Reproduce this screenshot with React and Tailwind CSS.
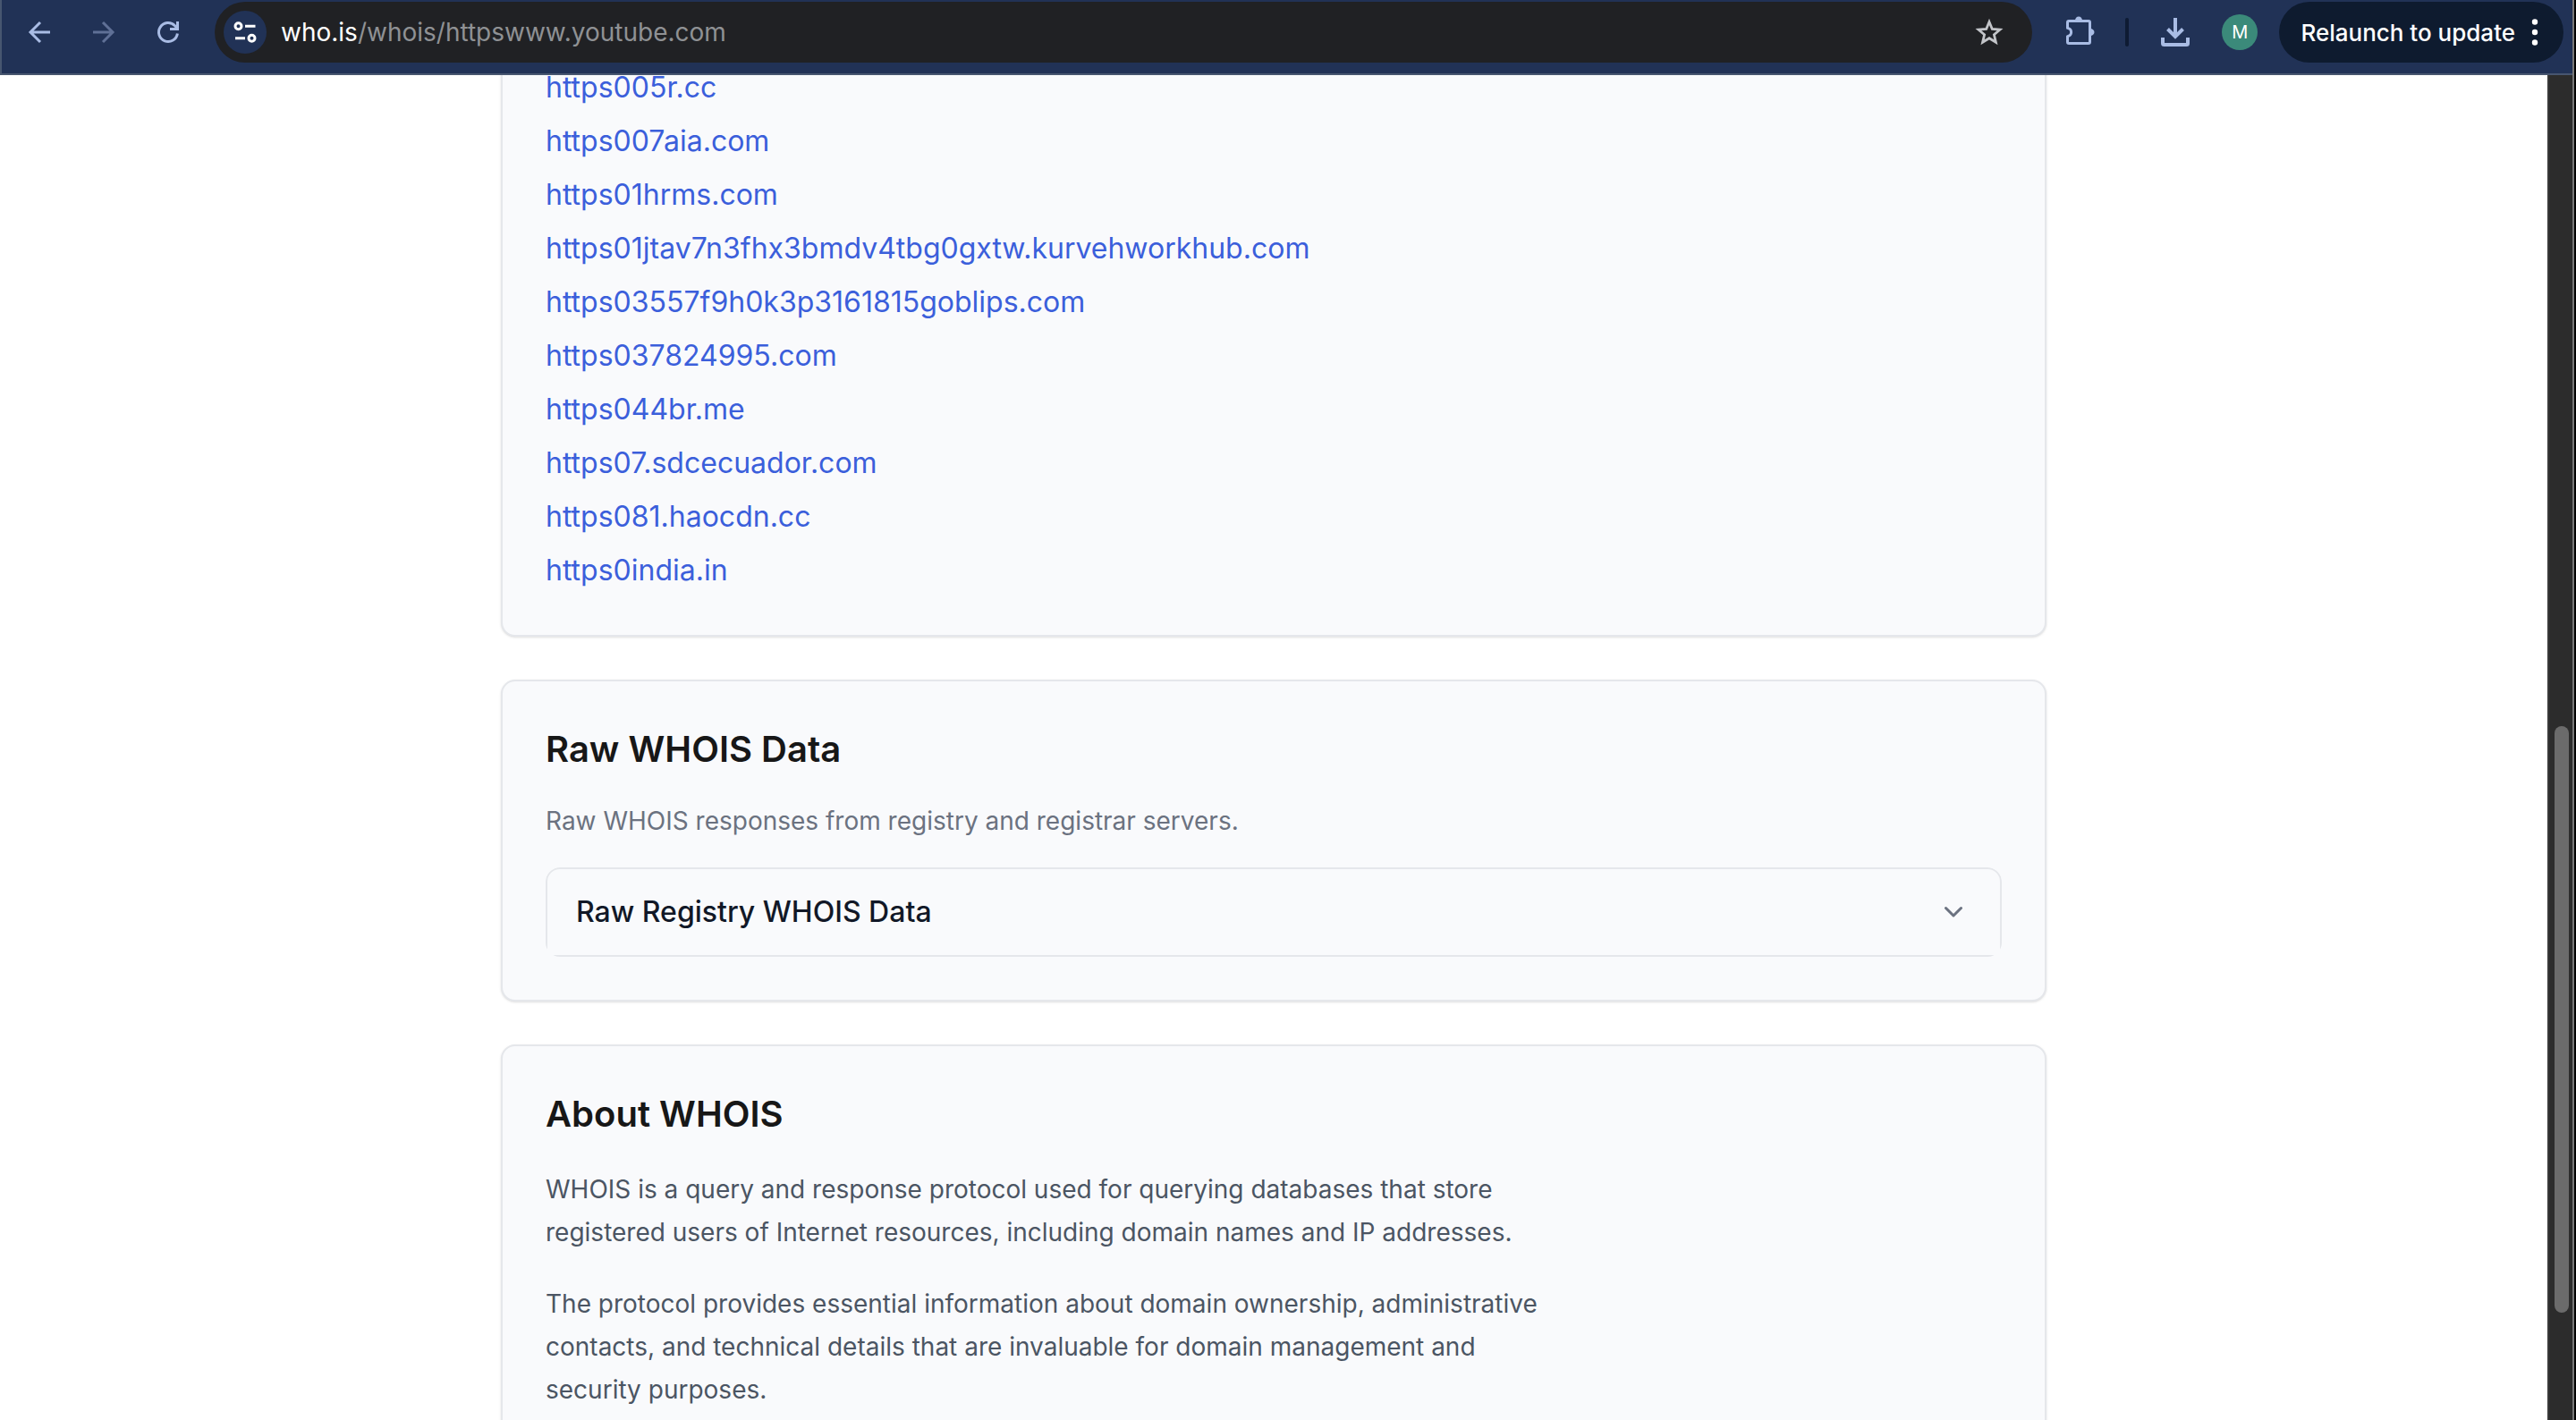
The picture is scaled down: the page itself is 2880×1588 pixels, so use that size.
import React from "react";

const domains = [
  "https005r.cc",
  "https007aia.com",
  "https01hrms.com",
  "https01jtav7n3fhx3bmdv4tbg0gxtw.kurvehworkhub.com",
  "https03557f9h0k3p3161815goblips.com",
  "https037824995.com",
  "https044br.me",
  "https07.sdcecuador.com",
  "https081.haocdn.cc",
  "https0india.in",
];

function IconButton({ label, className = "", children }) {
  return (
    <button type="button" aria-label={label} className={`flex shrink-0 items-center justify-center ${className}`}>
      {children}
    </button>
  );
}

function Toolbar() {
  return (
    <header className="flex h-[84px] shrink-0 items-start border-b-2 border-l-2 border-[#47566f] bg-[#213256] pt-[2px] pr-[10px]">
      <nav aria-label="Browser" className="flex h-[68px] shrink-0 items-center gap-8 pl-[22px] text-[#a9bce4]">
        <IconButton label="Back" className="size-10">
          <svg viewBox="0 0 40 40" className="size-10" fill="none" stroke="currentColor" strokeWidth="3">
            <path d="M32 20H10.5M21 9L10 20l11 11" />
          </svg>
        </IconButton>
        <IconButton label="Forward" className="size-10 text-[#5f7096]">
          <svg viewBox="0 0 40 40" className="size-10" fill="none" stroke="currentColor" strokeWidth="3">
            <path d="M8 20h21.500M19 9l11 11-11 11" />
          </svg>
        </IconButton>
        <IconButton label="Reload" className="size-10">
          <svg viewBox="0 0 40 40" className="size-10" fill="none" stroke="currentColor" strokeWidth="3">
            <path d="M30.400 21.500A10.500 10.500 0 1 1 27.500 12.700L30 15.500" />
            <path d="M30.500 8v8.500H22" />
          </svg>
        </IconButton>
      </nav>
      <div className="ml-8 flex h-[68px] min-w-0 flex-1 items-center rounded-full bg-[#202124] pr-8 pl-[10px]">
        <IconButton label="View site information" className="size-12 rounded-full bg-[#213256] text-white">
          <svg viewBox="0 0 48 48" className="size-12" fill="none" stroke="currentColor" strokeWidth="3">
            <circle cx="16.500" cy="17.300" r="3.500" />
            <path d="M24 17.300h11.500M13 30.700h11" />
            <circle cx="31.500" cy="30.700" r="3.500" />
          </svg>
        </IconButton>
        <a href="#address" className="ml-4 flex-1 truncate text-[28px] leading-9 text-[#8f9194]">
          <span className="text-white">who.is</span>/whois/httpswww.youtube.com
        </a>
        <IconButton label="Bookmark this tab" className="size-8 text-[#c3c5c9]">
          <svg viewBox="0 0 32 32" className="size-8" fill="none" stroke="currentColor" strokeWidth="2.800">
            <path d="M16 4.500l3.300 8 8.700.7-6.600 5.600 2 8.400L16 22.700l-7.400 4.500 2-8.400L4 13.200l8.700-.7z" />
          </svg>
        </IconButton>
      </div>
      <div className="flex h-[68px] shrink-0 items-center text-[#a9bce4]">
        <IconButton label="Extensions" className="ml-8 size-10">
          <svg viewBox="0 0 40 40" className="size-10" fill="none">
            <path
              d="M9 7.500H31A1.500 1.500 0 0 1 32.500 9V31A1.500 1.500 0 0 1 31 32.500H9A1.500 1.500 0 0 1 7.500 31V24.600C13 23.500 13 16.500 7.500 15.400V9A1.500 1.500 0 0 1 9 7.500Z"
              stroke="currentColor"
              strokeWidth="3"
              strokeLinejoin="round"
            />
            <path d="M16 7a4 4.500 0 0 1 8 0zM33 16a4.500 4 0 0 1 0 8z" fill="currentColor" />
          </svg>
        </IconButton>
        <span className="ml-8 h-8 w-1 rounded-full bg-[#0e1b33]" />
        <IconButton label="Downloads" className="ml-8 size-10">
          <svg viewBox="0 0 40 40" className="size-10" fill="none" stroke="currentColor" strokeWidth="4">
            <path d="M20 4v21M11.500 16.500L20 25l8.500-8.500" />
            <path d="M6 26v6.500A1.500 1.500 0 0 0 7.500 34h25a1.500 1.500 0 0 0 1.500-1.500V26" />
          </svg>
        </IconButton>
        <button type="button" aria-label="Profile" className="ml-8 size-10 rounded-full bg-[#3b8a7a] text-xl text-white">
          M
        </button>
        <button
          type="button"
          className="ml-6 flex h-[68px] items-center gap-[18px] rounded-full bg-[#0e1b2f] pr-7 pl-6 text-[26px] font-medium text-white"
        >
          Relaunch to update
          <svg viewBox="0 0 8 32" className="h-8 w-2" fill="currentColor">
            <circle cx="4" cy="4.500" r="3.200" />
            <circle cx="4" cy="16" r="3.200" />
            <circle cx="4" cy="27.500" r="3.200" />
          </svg>
        </button>
      </div>
    </header>
  );
}

function Card({ children }) {
  return (
    <section className="rounded-2xl border-2 border-gray-200 bg-[#f9fafc] p-12 shadow-sm">{children}</section>
  );
}

function CardTitle({ children }) {
  return <h2 className="text-[40px] leading-[56px] font-semibold text-[#171717]">{children}</h2>;
}

export default function App() {
  return (
    <div className="h-screen border-r-2 border-black font-['Inter',sans-serif]">
      <div className="flex h-full flex-col overflow-hidden border-r-2 border-[#777777] bg-white">
        <Toolbar />
        <div className="flex min-h-0 flex-1">
          <main className="min-w-0 flex-1 overflow-hidden">
            <div className="mx-auto -mt-[60px] flex max-w-[1728px] flex-col gap-12">
              <Card>
                <ul className="flex flex-col gap-3">
                  {domains.map((d) => (
                    <li key={d} className="text-[32px] leading-[48px]">
                      <a href={`#${d}`} className="text-[#3b5fdb]">
                        {d}
                      </a>
                    </li>
                  ))}
                </ul>
              </Card>
              <Card>
                <CardTitle>Raw WHOIS Data</CardTitle>
                <p className="my-8 text-[28px] leading-10 text-[#6b7280]">
                  Raw WHOIS responses from registry and registrar servers.
                </p>
                <div className="overflow-hidden rounded-2xl">
                  <button
                    type="button"
                    aria-expanded="false"
                    className="flex h-[100px] w-full items-center justify-between rounded-t-2xl border-2 border-gray-200 px-8 text-left text-[32px] font-medium text-[#111827]"
                  >
                    Raw Registry WHOIS Data
                    <svg
                      viewBox="0 0 40 40"
                      className="size-10 text-[#6b7280]"
                      fill="none"
                      stroke="currentColor"
                      strokeWidth="3"
                      strokeLinecap="round"
                      strokeLinejoin="round"
                    >
                      <path d="M11.500 15.500L20 24l8.500-8.500" />
                    </svg>
                  </button>
                </div>
              </Card>
              <Card>
                <CardTitle>About WHOIS</CardTitle>
                <div className="mt-8 flex max-w-[1120px] flex-col gap-8 text-[28px] leading-[48px] text-[#4b5563]">
                  <p>
                    WHOIS is a query and response protocol used for querying databases that store registered users of
                    Internet resources, including domain names and IP addresses.
                  </p>
                  <p>
                    The protocol provides essential information about domain ownership, administrative contacts, and
                    technical details that are invaluable for domain management and security purposes.
                  </p>
                </div>
              </Card>
            </div>
          </main>
          <div className="flex w-7 shrink-0 flex-col border-l-2 border-[#3a3a3a] bg-[#2c2c2c] pr-1 pl-[6px]">
            <div className="flex-[728]" />
            <div className="flex-[656] rounded-full bg-[#6b6b6b]" />
            <div className="flex-[120]" />
          </div>
        </div>
      </div>
    </div>
  );
}
